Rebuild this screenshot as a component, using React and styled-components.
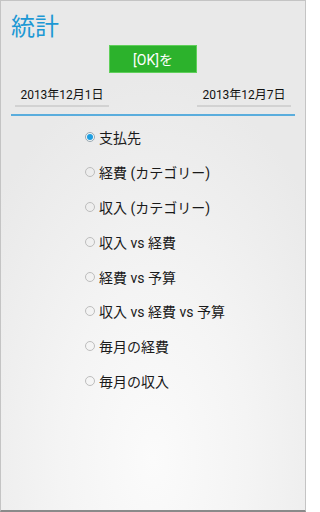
import React, { useState } from 'react';
import styled, { createGlobalStyle } from 'styled-components';

const GlobalStyle = createGlobalStyle`
  html, body {
    margin: 0;
    padding: 0;
    width: 306px;
    height: 512px;
    overflow: hidden;
  }
  body {
    font-family: 'Roboto', 'Noto Sans CJK JP', sans-serif;
  }
`;

const Screen = styled.div`
  box-sizing: border-box;
  width: 306px;
  height: 512px;
  border: 1px solid #c4c4c4;
  border-bottom: 2px solid #8a8a8a;
  background: radial-gradient(ellipse 70% 75% at 50% 90%, #fbfbfb 0%, #f4f4f4 45%, #e9e9e9 100%);
  display: flex;
  flex-direction: column;
`;

const Title = styled.h1`
  margin: 0;
  padding: 9px 0 0 10px;
  height: 35px;
  font-size: 24px;
  font-weight: 400;
  line-height: 30px;
  color: #1d98d4;
  font-family: 'Noto Sans CJK JP', sans-serif;
`;

const OkButton = styled.button`
  align-self: center;
  width: 88px;
  height: 28px;
  background: #2cb22c;
  border: 1px solid #5fcf5a;
  color: #fff;
  font-size: 14px;
  font-family: 'Roboto', 'Noto Sans CJK JP', sans-serif;
  padding: 0;
`;

const DateRow = styled.div`
  display: flex;
  justify-content: space-between;
  padding: 0 14px;
  margin-top: 12px;
`;

const DateButton = styled.div`
  width: 94px;
  height: 20px;
  border-bottom: 2px solid #d2d2d2;
  font-size: 12px;
  line-height: 20px;
  color: #111;
  text-align: center;
  font-family: 'Roboto', 'Noto Sans CJK JP', sans-serif;
`;

const Divider = styled.div`
  height: 2px;
  background: #5aaddd;
  margin: 7px 10px 0 10px;
`;

const RadioList = styled.div`
  display: flex;
  flex-direction: column;
  padding: 4px 0 0 84px;
`;

const Option = styled.label`
  display: flex;
  align-items: center;
  height: 34.8px;
  font-size: 14px;
  color: #1a1a1a;
  font-family: 'Roboto', 'Noto Sans CJK JP', sans-serif;
`;

const Radio = styled.span`
  box-sizing: border-box;
  width: 10px;
  height: 10px;
  border-radius: 50%;
  border: 1px solid ${p => (p.$on ? '#9aa8b0' : '#bdbdbd')};
  background: ${p => (p.$on ? '#f2f6f8' : 'transparent')};
  margin-right: 4px;
  display: flex;
  align-items: center;
  justify-content: center;

  &::after {
    content: '';
    width: 6px;
    height: 6px;
    border-radius: 50%;
    background: ${p => (p.$on ? '#1e9ee0' : 'transparent')};
  }
`;

const options = [
  '支払先',
  '経費 (カテゴリー)',
  '収入 (カテゴリー)',
  '収入 vs 経費',
  '経費 vs 予算',
  '収入 vs 経費 vs 予算',
  '毎月の経費',
  '毎月の収入',
];

export default function App() {
  const [selected, setSelected] = useState(0);

  return (
    <>
      <GlobalStyle />
      <Screen>
        <Title>統計</Title>
        <OkButton>[OK]を</OkButton>
        <DateRow>
          <DateButton>2013年12月1日</DateButton>
          <DateButton>2013年12月7日</DateButton>
        </DateRow>
        <Divider />
        <RadioList>
          {options.map((o, i) => (
            <Option key={o} onClick={() => setSelected(i)}>
              <Radio $on={selected === i} />
              {o}
            </Option>
          ))}
        </RadioList>
      </Screen>
    </>
  );
}
